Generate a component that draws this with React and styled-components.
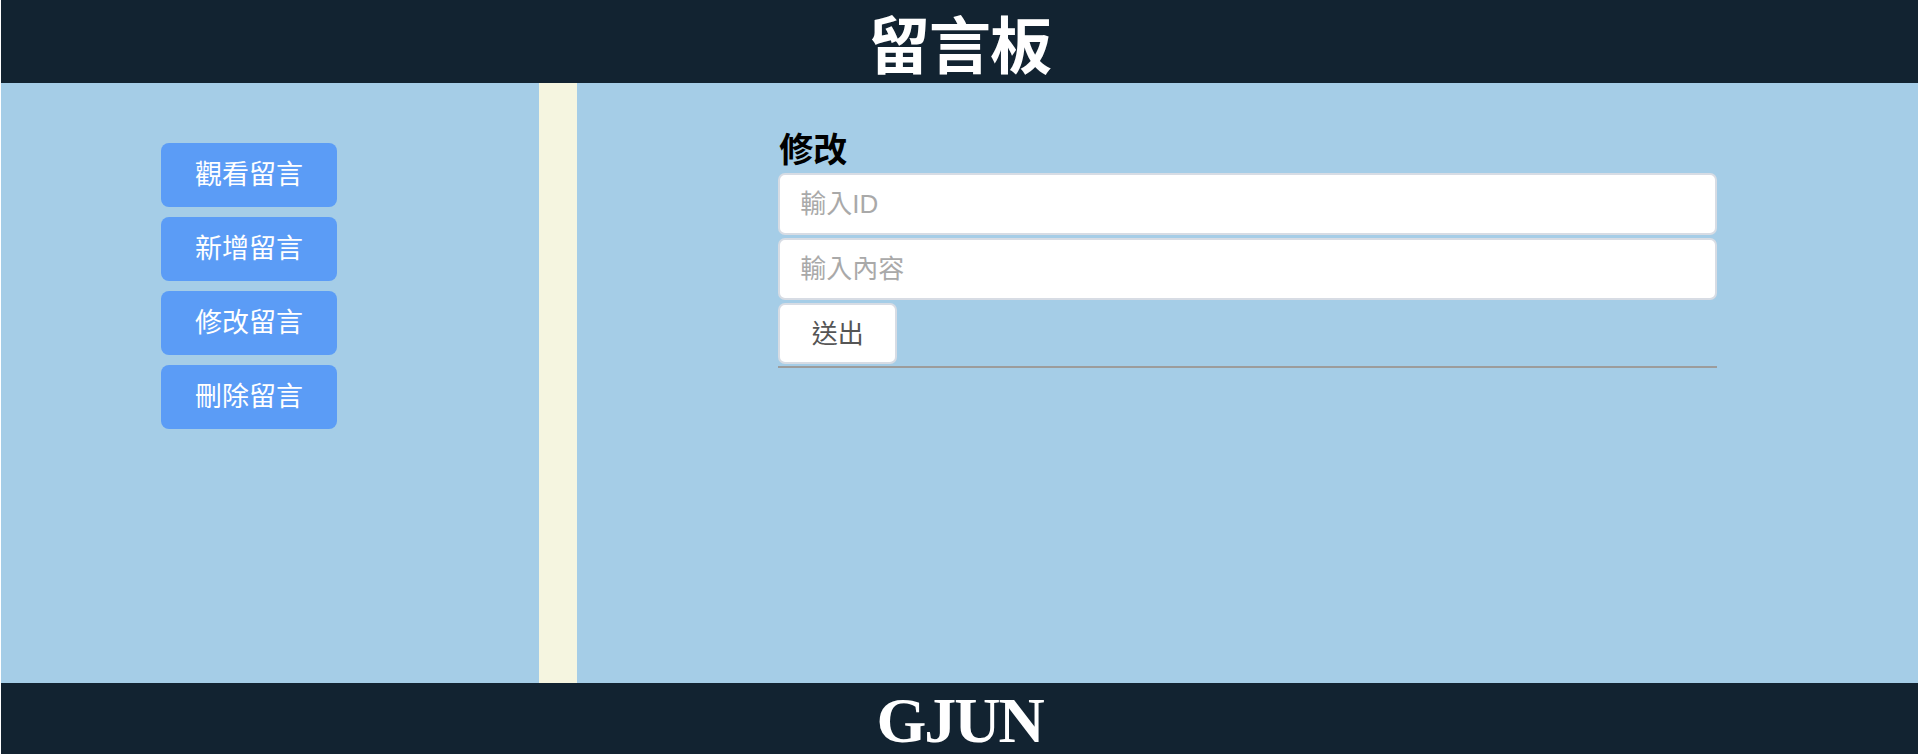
import React from "react";
import styled, { createGlobalStyle } from "styled-components";

const Global = createGlobalStyle`
  html, body { margin: 0; padding: 0; }
  body {
    background: #ffffff;
    font-family: "Liberation Sans", "Noto Sans CJK TC", sans-serif;
  }
  * { box-sizing: border-box; }
`;

const Page = styled.div`
  display: flex;
  flex-direction: column;
  height: 754px;
  margin-left: 1px;
`;

const Header = styled.header`
  height: 83px;
  background: #122331;
  display: flex;
  align-items: center;
  justify-content: center;
`;

const Title = styled.h1`
  margin: 0;
  color: #ffffff;
  font-family: "Noto Sans CJK TC", sans-serif;
  font-weight: 700;
  font-size: 62px;
  line-height: 1;
  letter-spacing: -1px;
`;

const Body = styled.div`
  flex: 1;
  display: flex;
  background: #a5cde7;
`;

const Sidebar = styled.nav`
  width: 538px;
  padding: 60px 0 0 160px;
  display: flex;
  flex-direction: column;
  gap: 10px;
`;

const NavButton = styled.button`
  width: 176px;
  height: 64px;
  border: none;
  border-radius: 8px;
  background: #5b9cf6;
  color: #ffffff;
  font-family: "Noto Sans CJK TC", sans-serif;
  font-size: 27px;
  line-height: 1;
  cursor: pointer;
  padding: 0 0 6px;
`;

const Divider = styled.div`
  width: 38px;
  background: #f5f5e0;
`;

const Main = styled.main`
  flex: 1;
  padding-top: 45px;
`;

const Form = styled.form`
  width: 70%;
  margin: 0 auto;
  display: flex;
  flex-direction: column;
  align-items: flex-start;
`;

const FormTitle = styled.h2`
  margin: 0 0 5px 1px;
  font-family: "Noto Sans CJK TC", sans-serif;
  font-size: 34px;
  font-weight: 700;
  line-height: 40px;
  color: #000;
`;

const Input = styled.input`
  width: 100%;
  height: 62px;
  margin-bottom: 3px;
  border: 2px solid #d7dce4;
  border-radius: 7px;
  background: #ffffff;
  padding: 0 20px;
  font-family: "Liberation Sans", "Noto Sans CJK TC", sans-serif;
  font-size: 26px;
  color: #333;
  outline: none;
  &::placeholder { color: #a9a9a9; }
`;

const Submit = styled.button`
  width: 119px;
  height: 61px;
  border: 2px solid #d7dce4;
  border-radius: 7px;
  background: #ffffff;
  color: #555555;
  font-family: "Noto Sans CJK TC", sans-serif;
  font-size: 26px;
  line-height: 1;
  padding: 0 0 4px;
  cursor: pointer;
`;

const Rule = styled.div`
  width: 100%;
  height: 2px;
  margin-top: 2px;
  background: #9c9c9c;
`;

const Footer = styled.footer`
  height: 71px;
  background: #122331;
  display: flex;
  align-items: center;
  justify-content: center;
`;

const Brand = styled.div`
  color: #ffffff;
  font-family: "Liberation Serif", "Times New Roman", serif;
  font-weight: 700;
  font-size: 64px;
  line-height: 1;
  margin-top: 4px;
  letter-spacing: -2px;
`;

const navItems = ["觀看留言", "新增留言", "修改留言", "刪除留言"];

export default function App() {
  return (
    <>
      <Global />
      <Page>
        <Header>
          <Title>留言板</Title>
        </Header>
        <Body>
          <Sidebar>
            {navItems.map((t) => (
              <NavButton key={t} type="button">{t}</NavButton>
            ))}
          </Sidebar>
          <Divider />
          <Main>
            <Form onSubmit={(e) => e.preventDefault()}>
              <FormTitle>修改</FormTitle>
              <Input placeholder="輸入ID" />
              <Input placeholder="輸入內容" />
              <Submit type="submit">送出</Submit>
              <Rule />
            </Form>
          </Main>
        </Body>
        <Footer>
          <Brand>GJUN</Brand>
        </Footer>
      </Page>
    </>
  );
}
